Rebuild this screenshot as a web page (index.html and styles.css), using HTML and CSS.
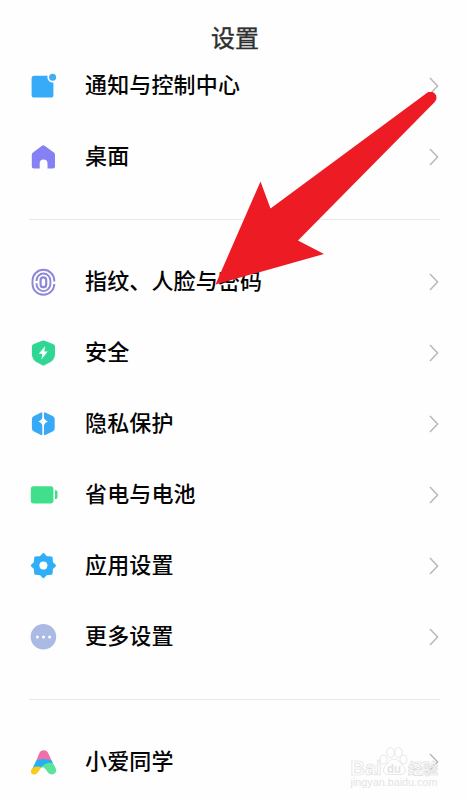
FILE: index.html
```html
<!DOCTYPE html>
<html lang="zh-CN">
<head>
<meta charset="utf-8">
<title>设置</title>
<link rel="stylesheet" href="styles.css">
</head>
<body>
<main class="screen">
  <h1 class="title">设置</h1>
  <ul class="group">
    <li class="row">
      <svg class="icon" viewBox="0 0 28 28"><rect x="2.6" y="2.8" width="21.8" height="21.8" rx="2.6" fill="#38abf8"/><circle cx="23.6" cy="4.2" r="5.2" fill="#fefefe"/><circle cx="23.6" cy="4.2" r="3.5" fill="#42adf2"/></svg>
      <span class="label">通知与控制中心</span>
      <svg class="chevron" viewBox="0 0 10 18"><path d="M1 1l7.6 8L1 17"/></svg>
    </li>
    <li class="row">
      <svg class="icon" viewBox="0 0 28 28"><path d="M4 8.600L12.700 1.900Q14.300.700 15.900 1.900L24.900 8.600Q26 9.500 26 10.800V22.500Q26 24.600 23.900 24.600H18.500V19.400A3.900 3.900 0 0 0 10.700 19.400V24.600H4.900Q2.800 24.600 2.800 22.500V10.800Q2.800 9.500 4 8.600Z" fill="#8580f4"/></svg>
      <span class="label">桌面</span>
      <svg class="chevron" viewBox="0 0 10 18"><path d="M1 1l7.600 8L1 17"/></svg>
    </li>
  </ul>
  <hr class="divider">
  <ul class="group">
    <li class="row">
      <svg class="icon" viewBox="0 0 28 28" fill="none" stroke="#8d87d8" stroke-width="1.900"><path d="M25.300 12.500V11.600A10.900 10.800 0 0 0 3.500 11.600V15A10.900 10.800 0 0 0 25.300 15"/><path d="M7.500 12V11.800A6.950 7.300 0 0 1 21.400 11.800V14.800A6.950 7.300 0 0 1 7.500 14.800V14.200"/><rect x="11.600" y="8.400" width="5.600" height="9.800" rx="2.800" stroke-width="2.200"/></svg>
      <span class="label">指纹、人脸与密码</span>
      <svg class="chevron" viewBox="0 0 10 18"><path d="M1 1l7.600 8L1 17"/></svg>
    </li>
    <li class="row">
      <svg class="icon" viewBox="0 0 28 28"><path d="M13 .8Q14.400 0 15.800.8L24.500 4.300Q26 5 26 6.500V14Q26 19 22 21.800L15.900 25Q14.400 26 12.900 25L6.800 21.800Q2.900 19 2.900 14V6.500Q2.900 5 4.300 4.300Z" fill="#2fd795"/><path d="M16.200 6L9.800 13.800H13.400L12.400 19.400L18.700 11.500H15.300Z" fill="#fff"/></svg>
      <span class="label">安全</span>
      <svg class="chevron" viewBox="0 0 10 18"><path d="M1 1l7.600 8L1 17"/></svg>
    </li>
    <li class="row">
      <svg class="icon" viewBox="0 0 28 28"><path d="M12 1.500Q13.300 1 13.300 2.300V23.500Q13.300 24.700 12 24.100L5 20.600Q2.900 19.500 2.900 17.500V8Q2.900 6 5 5ZM16.300 1.500L23.600 5Q25.700 6 25.700 8V17.500Q25.700 19.500 23.600 20.600L16.300 24.100Q15 24.700 15 23.500V2.300Q15 1 16.300 1.500Z" fill="#38a9f7"/><path d="M14.200 5.200Q15.400 9.300 19 10.500Q15.400 11.700 14.200 16.500Q13 11.700 9.300 10.500Q13 9.300 14.200 5.200Z" fill="#fff"/></svg>
      <span class="label">隐私保护</span>
      <svg class="chevron" viewBox="0 0 10 18"><path d="M1 1l7.600 8L1 17"/></svg>
    </li>
    <li class="row">
      <svg class="icon" viewBox="0 0 28 28"><g fill="#40df8c"><rect x="1.800" y="4.200" width="22.600" height="17.300" rx="2.700"/><path d="M26 8.300h.8Q28.500 8.300 28.500 10.200V15Q28.500 17 26.800 17H26Z"/></g></svg>
      <span class="label">省电与电池</span>
      <svg class="chevron" viewBox="0 0 10 18"><path d="M1 1l7.600 8L1 17"/></svg>
    </li>
    <li class="row">
      <svg class="icon" viewBox="0 0 28 28"><path d="M14.400 1.300L17.200 4.300L22.300 4.700L22.700 9.800L25.700 12.600L22.700 15.400L22.300 20.500L17.200 20.900L14.400 23.900L11.600 20.900L6.500 20.500L6.100 15.400L3.100 12.600L6.100 9.800L6.500 4.700L11.600 4.300Z" fill="#30aef8" stroke="#30aef8" stroke-width="2.600" stroke-linejoin="round"/><circle cx="14.400" cy="12.600" r="4" fill="#fff"/></svg>
      <span class="label">应用设置</span>
      <svg class="chevron" viewBox="0 0 10 18"><path d="M1 1l7.600 8L1 17"/></svg>
    </li>
    <li class="row">
      <svg class="icon" viewBox="0 0 28 28"><circle cx="14.400" cy="12.700" r="12.800" fill="#aabae5"/><g fill="#fff"><circle cx="8.400" cy="12.900" r="1.500"/><circle cx="14.500" cy="12.900" r="1.500"/><circle cx="20.600" cy="12.900" r="1.500"/></g></svg>
      <span class="label">更多设置</span>
      <svg class="chevron" viewBox="0 0 10 18"><path d="M1 1l7.600 8L1 17"/></svg>
    </li>
  </ul>
  <hr class="divider">
  <ul class="group">
    <li class="row">
      <svg class="icon" viewBox="0 0 28 28"><path d="M7 12.500L10.200 4.500Q11.500 1.300 14.700 1.300T19.400 4.500L23.700 14Q15 9.500 7 12.500Z" fill="#f16fa7"/><path d="M7.300 11.500Q14 8.500 22.500 11.500L25.500 18Q18 13 13 18.500L3 20.500Z" fill="#22b1f6"/><path d="M12.500 17.600Q16.500 14.300 20 13.800Q23.800 13.300 25.700 17.200L27.100 20.500Q27.600 24.500 23.500 25.500Q20 25.800 17.500 21.500Q15.800 18.400 12.500 17.600Z" fill="#5be59b"/><path d="M3 19.500Q5 17.500 8.500 17.500Q11 17.500 12.500 17.900L9.500 22.500Q7.700 25.700 4.800 25.500Q1.300 24.800 1.900 21.800Z" fill="#f6cd18"/></svg>
      <span class="label">小爱同学</span>
      <svg class="chevron" viewBox="0 0 10 18"><path d="M1 1l7.600 8L1 17"/></svg>
    </li>
  </ul>
</main>
<svg class="pointer" viewBox="0 0 222 194"><path d="M.500 192.500L45.500 89.500L55.500 116.500L211.500 1.200A6 6 0 0 1 219.500 10.200L83 148.500L109 162Z" fill="#ed1c24"/></svg>
<svg class="watermark" viewBox="0 0 96 48">
  <g fill="#fff" stroke="#d9d9d9" stroke-width=".7">
    <ellipse cx="35.500" cy="13.500" rx="3.400" ry="4.500"/><ellipse cx="42.500" cy="6.500" rx="3.700" ry="5"/><ellipse cx="50.500" cy="6.500" rx="3.700" ry="5"/><ellipse cx="55.500" cy="13.500" rx="3.400" ry="4.500"/>
    <path d="M46 13C42 13 40 17 37 20.500C34 24 35.500 28.500 40 28.500H52C57.500 28.500 59 24 55.500 20.500C52 17 50.500 13 46 13Z"/>
    <text class="mark-latin" x="2.500" y="28.500" textLength="31" lengthAdjust="spacingAndGlyphs">Bai</text>
    <text class="mark-cjk" x="60" y="28">经验</text>
  </g>
  <text class="mark-du" x="39" y="27" textLength="14" lengthAdjust="spacingAndGlyphs">du</text>
  <text class="mark-url" x="2.500" y="40" textLength="87" lengthAdjust="spacingAndGlyphs">jingyan.baidu.com</text>
</svg>
</body>
</html>
```
FILE: styles.css
```css
* {
  box-sizing: border-box;
}

body {
  position: relative;
  margin: 0;
  height: 801px;
  overflow: hidden;
  background: #fefefe;
  color: #050505;
  font-family: "Noto Sans CJK SC", sans-serif;
}

.screen {
  padding-top: 12px;
}

.title {
  margin: 0;
  height: 38px;
  padding-left: 3px;
  line-height: 49px;
  font-size: 24px;
  font-weight: 400;
  text-align: center;
  color: #303030;
  -webkit-text-stroke: 0.4px #303030;
}

.group {
  margin: 0;
  padding: 0 28px 0 29px;
  list-style: none;
}

.row {
  display: flex;
  align-items: center;
  height: 71px;
}

.icon {
  flex: none;
  width: 28px;
  height: 28px;
  margin-top: 2px;
  overflow: visible;
}

.label {
  flex: 1;
  margin-left: 28px;
  padding-bottom: 5px;
  font-size: 22px;
  letter-spacing: 0.15px;
  font-weight: 500;
  line-height: 32px;
  white-space: nowrap;
}

.chevron {
  flex: none;
  width: 10px;
  height: 18px;
  fill: none;
  stroke: #b8b8b8;
  stroke-width: 1.5;
}

.divider {
  height: 1px;
  margin: 27px 27px 26px 29px;
  border: 0;
  background: #e9e9e9;
}

.pointer {
  position: absolute;
  left: 215px;
  top: 92px;
  width: 222px;
  height: 194px;
}

.watermark {
  position: absolute;
  left: 348px;
  top: 746px;
  width: 96px;
  height: 48px;
  opacity: 0.85;
}

.mark-latin {
  font: bold 21px "Liberation Sans", sans-serif;
}

.mark-du {
  font: bold 13px "Liberation Sans", sans-serif;
  fill: #e0e0e0;
}

.mark-cjk {
  font: bold 15px "Noto Sans CJK SC", sans-serif;
}

.mark-url {
  font: 10px "Liberation Sans", sans-serif;
  fill: #dedede;
}
```
